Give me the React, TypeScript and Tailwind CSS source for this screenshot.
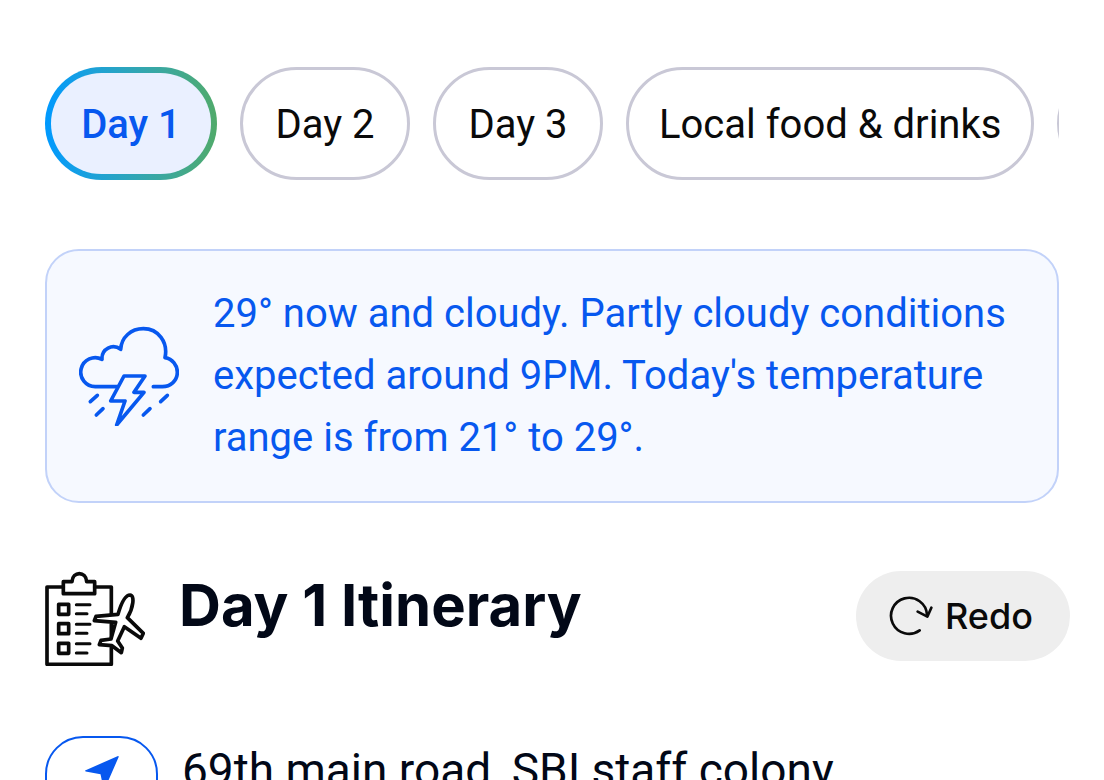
import { useState } from "react";
import type { ReactNode } from "react";

const TABS = ["Day 1", "Day 2", "Day 3", "Local food & drinks", "Things to know"];

function Tab({ label, active, onClick }: { label: string; active: boolean; onClick: () => void }) {
  const base = "h-[113px] shrink-0 cursor-pointer whitespace-nowrap rounded-full text-[40px] leading-[48px]";
  if (active) {
    return (
      <button
        type="button"
        aria-pressed="true"
        onClick={onClick}
        className={`${base} min-w-[172px] bg-linear-to-r from-[#0099ff] to-[#50aa6a] p-[6px] font-medium text-[#0758ef]`}
      >
        <span className="flex h-full items-center justify-center rounded-full bg-[#eaf0ff] px-[28px] pt-[2px]">{label}</span>
      </button>
    );
  }
  return (
    <button
      type="button"
      aria-pressed="false"
      onClick={onClick}
      className={`${base} min-w-[170px] border-[3px] border-[#c9c8d6] bg-white px-[30px] pt-[2px] text-[#0a0a0a]`}
    >
      {label}
    </button>
  );
}

function StormIcon() {
  return (
    <svg viewBox="57 46 300 300" className="size-[100px] shrink-0" fill="none" stroke="#0758ef" strokeWidth="11" strokeLinecap="round" strokeLinejoin="round" aria-hidden="true">
      <path d="M172 228H106A43.500 43.500 0 1 1 126 146C124 114 158 98 182 116C184 80 213 54 250 54C295 54 325 95 315 141C338 145 352 164 352 185C352 210 332 228 307 228H280" />
      <path d="M192 196H255L222 245H252L170 343L195 271H152Z" />
      <path d="M91 273L112 254M109 313L129 294M250 313L270 294M302 273L322 254" />
    </svg>
  );
}

function ItineraryIcon() {
  return (
    <svg viewBox="45 30 300 285" className="h-[95px] w-[100px] shrink-0" fill="none" stroke="#0a0a0a" strokeWidth="11" strokeLinecap="round" strokeLinejoin="round" aria-hidden="true">
      <path d="M100 78H51V310H244V260M194 78H244V158M244 190V230" />
      <path d="M100 98V62H126C128 30 168 30 170 62H194V98Z" />
      <path d="M86 130H116V160H86ZM86 188H116V218H86ZM86 247H116V277H86Z" />
      <path strokeWidth="9" d="M139 131H180M139 158H171M139 190H180M139 217H171M139 248H180M139 276H171" />
      <path fill="#fff" d="M264 160C272 132 284 102 300 102C315 103 310 140 292 170L340 217L333 232L283 197L263 240L277 261L274 275L246 254L208 251L213 238L243 234L257 184L193 179L198 166Z" />
    </svg>
  );
}

function RedoIcon() {
  return (
    <svg viewBox="144 108 132 123" className="h-[41px] w-[44px] shrink-0" fill="none" stroke="#0a0a0a" strokeWidth="8" strokeLinecap="round" strokeLinejoin="round" aria-hidden="true">
      <path d="M236 211A54 54 0 1 1 258 164" />
      <path d="M230 155L259 170L271 143" />
    </svg>
  );
}

function LocationBadge({ children }: { children: ReactNode }) {
  return (
    <span className="flex h-[90px] w-[113px] shrink-0 justify-center rounded-[38px] border-2 border-[#0758ef] pt-[18px]">
      {children}
    </span>
  );
}

export default function App() {
  const [selected, setSelected] = useState("Day 1");
  return (
    <main className="h-screen overflow-hidden bg-white px-[45px] pt-[67px] font-['Roboto',sans-serif]">
      <nav aria-label="Trip sections" className="flex gap-[23px] overflow-hidden">
        {TABS.map((tab) => (
          <Tab key={tab} label={tab} active={tab === selected} onClick={() => setSelected(tab)} />
        ))}
      </nav>

      <section className="mt-[69px] flex items-center gap-[34px] rounded-[34px] border-2 border-[#c2d2f9] bg-[#f6f9ff] px-[32px] py-[32px]">
        <StormIcon />
        <p className="text-[40px] leading-[62px] text-[#0758ef]">
          29° now and cloudy. Partly cloudy conditions expected around 9PM. Today's temperature range is from 21° to 29°.
        </p>
      </section>

      <header className="-mr-[11px] mt-[68px] flex items-start font-['Inter',sans-serif]">
        <ItineraryIcon />
        <h1 className="ml-[34px] text-[58px] font-bold leading-[68px] text-[#020817]">Day 1 Itinerary</h1>
        <button type="button" className="ml-auto flex h-[90px] cursor-pointer items-center gap-[12px] rounded-full bg-[#eeeeee] pl-[33px] pr-[37px] text-[36px] font-medium text-[#0a0a0a]">
          <RedoIcon />
          Redo
        </button>
      </header>

      <div className="mt-[70px] flex items-start gap-[24px]">
        <LocationBadge>
          <svg viewBox="165 110 103 103" className="size-[34px]" fill="#0758ef" aria-hidden="true">
            <path d="M265 110Q268 110 267 113L225 209Q223 213 221 208L212 165L167 157Q163 155 167 153Z" />
          </svg>
        </LocationBadge>
        <p className="text-[46px] leading-[68px] text-[#020817]">69th main road, SBI staff colony</p>
      </div>
    </main>
  );
}
